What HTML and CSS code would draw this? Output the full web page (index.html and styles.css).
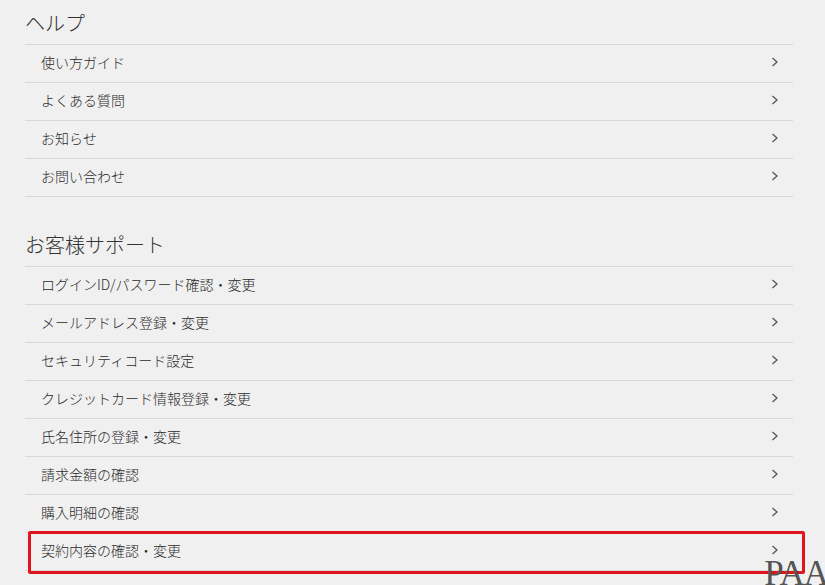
FILE: index.html
```html
<!DOCTYPE html>
<html lang="ja">
<head>
    <meta charset="UTF-8">
    <meta name="viewport" content="width=device-width, initial-scale=1.0">
    <title>ヘルプ</title>
    <link rel="stylesheet" href="styles.css">
</head>
<body>
    <div class="container">
        <div class="section">
            <h2 class="section_title">ヘルプ</h2>
            <ul class="menu">
                <li class="menu_item"><a href="#">使い方ガイド<svg class="chev" viewBox="0 0 8 10"><path d="M1.5 1 L6 5 L1.5 9"/></svg></a></li>
                <li class="menu_item"><a href="#">よくある質問<svg class="chev" viewBox="0 0 8 10"><path d="M1.5 1 L6 5 L1.5 9"/></svg></a></li>
                <li class="menu_item"><a href="#">お知らせ<svg class="chev" viewBox="0 0 8 10"><path d="M1.5 1 L6 5 L1.5 9"/></svg></a></li>
                <li class="menu_item"><a href="#">お問い合わせ<svg class="chev" viewBox="0 0 8 10"><path d="M1.5 1 L6 5 L1.5 9"/></svg></a></li>
            </ul>
        </div>

        <div class="section section_support">
            <h2 class="section_title">お客様サポート</h2>
            <ul class="menu">
                <li class="menu_item"><a href="#">ログインID/パスワード確認・変更<svg class="chev" viewBox="0 0 8 10"><path d="M1.5 1 L6 5 L1.5 9"/></svg></a></li>
                <li class="menu_item"><a href="#">メールアドレス登録・変更<svg class="chev" viewBox="0 0 8 10"><path d="M1.5 1 L6 5 L1.5 9"/></svg></a></li>
                <li class="menu_item"><a href="#">セキュリティコード設定<svg class="chev" viewBox="0 0 8 10"><path d="M1.5 1 L6 5 L1.5 9"/></svg></a></li>
                <li class="menu_item"><a href="#">クレジットカード情報登録・変更<svg class="chev" viewBox="0 0 8 10"><path d="M1.5 1 L6 5 L1.5 9"/></svg></a></li>
                <li class="menu_item"><a href="#">氏名住所の登録・変更<svg class="chev" viewBox="0 0 8 10"><path d="M1.5 1 L6 5 L1.5 9"/></svg></a></li>
                <li class="menu_item"><a href="#">請求金額の確認<svg class="chev" viewBox="0 0 8 10"><path d="M1.5 1 L6 5 L1.5 9"/></svg></a></li>
                <li class="menu_item"><a href="#">購入明細の確認<svg class="chev" viewBox="0 0 8 10"><path d="M1.5 1 L6 5 L1.5 9"/></svg></a></li>
                <li class="menu_item menu_item--marked"><a href="#">契約内容の確認・変更<svg class="chev" viewBox="0 0 8 10"><path d="M1.5 1 L6 5 L1.5 9"/></svg></a></li>
            </ul>
        </div>
    </div>

    <div class="watermark">PAA</div>
</body>
</html>
```

FILE: styles.css
```css
body {
    margin: 0;
    background: #f0f0f0;
    font-family: "Noto Sans CJK JP", "Noto Sans", sans-serif;
    color: #333;
    overflow: hidden;
    height: 585px;
    position: relative;
}
.container {
    width: 768px;
    margin-left: 25px;
}

.section_title {
    margin: 0;
    height: 44px;
    line-height: 46px;
    font-size: 20px;
    font-weight: 300;
    color: #333;
}
.section_support {
    margin-top: 25px;
}

.menu {
    list-style: none;
    margin: 0;
    padding: 0;
    border-top: 1px solid #d9d9d9;
}
.menu_item {
    border-bottom: 1px solid #d9d9d9;
    position: relative;
}
.menu_item > a {
    display: flex;
    align-items: center;
    justify-content: space-between;
    height: 34px;
    padding: 0 14px 3px 16px;
    font-size: 14px;
    font-weight: 300;
    color: #2b2b2b;
    text-decoration: none;
}
.chev {
    width: 8px;
    height: 10px;
    fill: none;
    stroke: #555;
    stroke-width: 1.3;
}

/* red highlight */
.menu_item--marked:after {
    content: "";
    position: absolute;
    top: -2px;
    left: 3px;
    right: -12px;
    bottom: -4px;
    border: 3px solid #e0141c;
    border-radius: 2px;
}

.watermark {
    position: absolute;
    right: -3px;
    bottom: -9px;
    font-family: "Liberation Serif", serif;
    font-size: 35px;
    color: #555;
    letter-spacing: -1px;
}
```
